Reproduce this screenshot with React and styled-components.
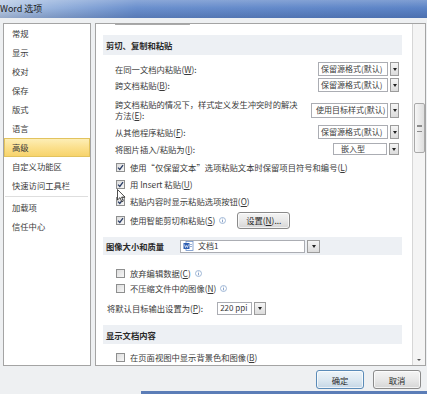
import React from "react";
import styled, { createGlobalStyle } from "styled-components";

const GlobalStyles = createGlobalStyle`
  html, body { margin: 0; padding: 0; }
  body {
    width: 427px;
    height: 394px;
    overflow: hidden;
    background: #eef0f2;
    font-family: "Noto Sans CJK SC", "Liberation Sans", sans-serif;
    font-size: 8.3px;
    color: #333;
  }
`;

const Window = styled.div`
  position: relative;
  width: 427px;
  height: 394px;
  display: flex;
  flex-direction: column;
  background: #eef0f2;
`;

const TitleBar = styled.div`
  height: 18px;
  flex: none;
  display: flex;
  align-items: center;
  font-size: 9px;
  line-height: 18px;
  color: #1c1c1c;
  background:
    linear-gradient(to bottom, rgba(255,255,255,0.22), rgba(255,255,255,0) 45%, rgba(0,20,70,0.18) 100%),
    linear-gradient(to right, #b9cce6 0%, #97b3dd 12%, #6a8fcd 32%, #5b83c6 100%);
`;

const Body = styled.div`
  display: flex;
  gap: 4px;
  padding: 5px 1px 0 3px;
  height: 343px;
`;

const Nav = styled.div`
  width: 86px;
  flex: none;
  border: 1px solid #a4a4a4;
  background: #fff;
  display: flex;
  flex-direction: column;
`;

const NavItem = styled.div`
  height: 19px;
  line-height: 19px;
  padding-left: ${(p) => (p.$active ? "7px" : "8px")};
  color: #3a3a3a;
  box-sizing: border-box;
  ${(p) =>
    p.$active &&
    `
    border: 1px solid #e2c35e;
    background: linear-gradient(to bottom, #fdeeb6 0%, #fbe08d 50%, #f7d36c 100%);
    line-height: 17px;
  `}
`;

const NavSep = styled.div`
  height: 1px;
  margin: 1px 2px 1px 1px;
  background: #dedede;
`;

const Panel = styled.div`
  flex: 1;
  border: 1px solid #a4a4a4;
  background: #fff;
  display: flex;
  overflow: hidden;
`;

const Content = styled.div`
  flex: 1;
  padding: 0 10px 0 7px;
  display: flex;
  flex-direction: column;
`;

const Stub = styled.div`
  height: 4px;
  width: 75px;
  margin-left: 12px;
  border: 1px solid #a9a9a9;
  border-top: none;
  border-radius: 0 0 3px 3px;
  background: linear-gradient(to bottom, #f1f1f1, #d9d9d9);
  box-sizing: border-box;
`;

const Section = styled.div`
  flex: none;
  height: ${(p) => p.$h}px;
  margin-top: ${(p) => p.$mt}px;
  display: flex;
  align-items: center;
  gap: 16px;
  padding-left: 3px;
  background: #edf0f4;
  color: #2a2a2a;
  font-weight: bold;
`;

const Row = styled.div`
  flex: none;
  height: ${(p) => p.$h}px;
  margin-top: ${(p) => p.$mt || 0}px;
  display: flex;
  align-items: center;
  justify-content: ${(p) => (p.$tight ? "flex-start" : "space-between")};
  gap: ${(p) => p.$gap || 5}px;
  padding-left: ${(p) => p.$indent}px;
  padding-right: 3px;
  color: #3a3a3a;
  line-height: 11px;
  white-space: nowrap;
`;

const Label = styled.span`
  display: inline-flex;
  align-items: center;
`;

const TwoLine = styled.span`
  display: block;
  width: 190px;
  white-space: normal;
  line-height: 11px;
`;

const Select = styled.div`
  display: flex;
  gap: 2px;
  height: ${(p) => p.$h}px;
  font-weight: normal;
`;

const Field = styled.div`
  width: ${(p) => p.$w}px;
  box-sizing: border-box;
  border: 1px solid #abadb3;
  background: #fff;
  display: flex;
  align-items: center;
  gap: 4px;
  padding-left: ${(p) => p.$pad || 2}px;
  color: #3a3a3a;
  font-size: 8px;
  line-height: 1;
  white-space: nowrap;
  overflow: hidden;
`;

const Arrow = styled.div`
  width: ${(p) => p.$w || 9}px;
  box-sizing: border-box;
  border: 1px solid #9c9c9c;
  background: linear-gradient(to bottom, #f5f5f5, #dcdcdc);
  display: flex;
  align-items: center;
  justify-content: center;
  &::after {
    content: "";
    border-left: 2.5px solid transparent;
    border-right: 2.5px solid transparent;
    border-top: 3px solid #222;
  }
`;

const Box = styled.span`
  width: 9px;
  height: 9px;
  flex: none;
  box-sizing: border-box;
  border: 1px solid #8e8f8f;
  background: linear-gradient(135deg, #dcdcdc, #f7f7f7);
  display: flex;
  align-items: center;
  justify-content: center;
`;

const Info = styled.svg`
  width: 7px;
  height: 7px;
  margin-left: 4px;
  flex: none;
`;

const Button = styled.div`
  width: ${(p) => p.$w}px;
  height: ${(p) => p.$h}px;
  box-sizing: border-box;
  border: 1px solid ${(p) => (p.$primary ? "#5a8bb8" : "#8a8a8a")};
  border-radius: 3px;
  background: ${(p) =>
    p.$primary
      ? "linear-gradient(to bottom, #edf4f9 0%, #dde9f2 50%, #c5d7e6 100%)"
      : "linear-gradient(to bottom, #f4f4f4 0%, #e8e8e8 50%, #d6d6d6 100%)"};
  display: flex;
  align-items: center;
  justify-content: center;
  color: #2a2a2a;
  font-size: 8.3px;
  margin-left: ${(p) => p.$ml || 0}px;
  box-shadow: inset 0 0 0 1px rgba(255,255,255,0.7);
`;

const ScrollBar = styled.div`
  width: 12px;
  flex: none;
  border-left: 1px solid #d6d6d6;
  background: #f4f4f4;
  display: flex;
  flex-direction: column;
  align-items: center;
`;

const Thumb = styled.div`
  width: 11px;
  height: 50px;
  margin-top: 79px;
  box-sizing: border-box;
  border: 1px solid #a9a9a9;
  border-radius: 2px;
  background: linear-gradient(to right, #f6f6f6, #dedede);
  display: flex;
  align-items: center;
  justify-content: center;
  &::after {
    content: "";
    width: 5px;
    height: 5px;
    border-top: 1px solid #8c8c8c;
    border-bottom: 1px solid #8c8c8c;
    box-shadow: inset 0 2px 0 -1px #8c8c8c;
  }
`;

const DownArrow = styled.div`
  margin-top: auto;
  margin-bottom: 4px;
  border-left: 2px solid transparent;
  border-right: 2px solid transparent;
  border-top: 2px solid #555;
`;

const Footer = styled.div`
  height: 25px;
  display: flex;
  align-items: flex-start;
  justify-content: flex-end;
  padding: 4px 6px 0 0;
  box-sizing: border-box;
`;

const Strip = styled.div`
  height: 3px;
  margin-left: 141px;
  background: #5b7db7;
`;

const Cursor = styled.svg`
  position: absolute;
  left: 117px;
  top: 189px;
  width: 9px;
  height: 14px;
`;

const Check = () => (
  <svg width="7" height="7" viewBox="0 0 7 7">
    <path d="M1 3.6 L2.8 5.4 L6 1.2" fill="none" stroke="#2a3d66" strokeWidth="1.3" />
  </svg>
);

const InfoIcon = () => (
  <Info viewBox="0 0 7 7">
    <circle cx="3.5" cy="3.5" r="3" fill="none" stroke="#8aa6cc" strokeWidth="0.8" />
    <rect x="3.1" y="3" width="0.8" height="2.3" fill="#6f8fbf" />
    <rect x="3.1" y="1.6" width="0.8" height="0.8" fill="#6f8fbf" />
  </Info>
);

const DocIcon = () => (
  <svg width="11" height="10" viewBox="0 0 11 10">
    <rect x="3" y="0.5" width="7" height="9" fill="#fff" stroke="#6d8fc6" strokeWidth="0.8" />
    <rect x="0.5" y="2" width="6" height="6" fill="#2f5fb3" />
    <path d="M1.5 3.5 L2.5 6.5 L3.5 4.5 L4.5 6.5 L5.5 3.5" fill="none" stroke="#fff" strokeWidth="0.7" />
    <rect x="7" y="3" width="2" height="0.7" fill="#6d8fc6" />
    <rect x="7" y="5" width="2" height="0.7" fill="#6d8fc6" />
  </svg>
);

const Dropdown = ({ text, w, aw, h = 14, pad, icon }) => (
  <Select $h={h}>
    <Field $w={w} $pad={pad}>
      {icon}
      {text}
    </Field>
    <Arrow $w={aw} />
  </Select>
);

const CheckRow = ({ checked, children, h, info, extra }) => (
  <Row $h={h} $indent={13} $tight>
    <Box>{checked && <Check />}</Box>
    <Label>
      {children}
      {info && <InfoIcon />}
    </Label>
    {extra}
  </Row>
);

const navItems = ["常规", "显示", "校对", "保存", "版式", "语言"];

export default function App() {
  return (
    <Window>
      <GlobalStyles />
      <TitleBar>Word 选项</TitleBar>
      <Body>
        <Nav>
          {navItems.map((n) => (
            <NavItem key={n}>{n}</NavItem>
          ))}
          <NavItem $active>高级</NavItem>
          <NavItem>自定义功能区</NavItem>
          <NavItem>快速访问工具栏</NavItem>
          <NavSep />
          <NavItem>加载项</NavItem>
          <NavItem>信任中心</NavItem>
        </Nav>

        <Panel>
          <Content>
            <Stub />
            <Section $h={20} $mt={10}>剪切、复制和粘贴</Section>
            <Row $h={16} $mt={6} $indent={12}>
              <Label>在同一文档内粘贴(<u>W</u>):</Label>
              <Dropdown text="保留源格式(默认)" w={70} />
            </Row>
            <Row $h={16} $indent={12}>
              <Label>跨文档粘贴(<u>B</u>):</Label>
              <Dropdown text="保留源格式(默认)" w={70} />
            </Row>
            <Row $h={30} $mt={2} $indent={12}>
              <TwoLine>
                跨文档粘贴的情况下，样式定义发生冲突时的解决
                <br />
                方法(<u>E</u>):
              </TwoLine>
              <Dropdown text="使用目标样式(默认)" w={77} h={15} pad={4} />
            </Row>
            <Row $h={14} $indent={12}>
              <Label>从其他程序粘贴(<u>F</u>):</Label>
              <Dropdown text="保留源格式(默认)" w={70} />
            </Row>
            <Row $h={20} $indent={12}>
              <Label>将图片插入/粘贴为(<u>I</u>):</Label>
              <Dropdown text="嵌入型" w={54} aw={10} h={12} pad={7} />
            </Row>
            <CheckRow h={16} checked>
              使用“仅保留文本”选项粘贴文本时保留项目符号和编号(<u>L</u>)
            </CheckRow>
            <CheckRow h={18} checked>
              用 Insert 粘贴(<u>U</u>)
            </CheckRow>
            <CheckRow h={16} checked>
              粘贴内容时显示粘贴选项按钮(<u>O</u>)
            </CheckRow>
            <CheckRow
              h={22}
              checked
              info
              extra={
                <Button $w={53} $h={17} $ml={6}>
                  设置(<u>N</u>)...
                </Button>
              }
            >
              使用智能剪切和粘贴(<u>S</u>)
            </CheckRow>

            <Section $h={18} $mt={6}>
              图像大小和质量
              <Dropdown text="文档1" w={125} aw={13} h={13} icon={<DocIcon />} />
            </Section>
            <Row $h={15} $mt={11} $indent={13} $tight>
              <Box />
              <Label>
                放弃编辑数据(<u>C</u>)
                <InfoIcon />
              </Label>
            </Row>
            <Row $h={14} $indent={13} $tight>
              <Box />
              <Label>
                不压缩文件中的图像(<u>N</u>)
                <InfoIcon />
              </Label>
            </Row>
            <Row $h={26} $indent={4} $gap={14} $tight>
              <Label>将默认目标输出设置为(<u>P</u>):</Label>
              <Dropdown text="220 ppi" w={35} aw={12} h={13} />
            </Row>

            <Section $h={19} $mt={4}>显示文档内容</Section>
            <Row $h={16} $mt={5} $indent={13} $tight>
              <Box />
              <Label>在页面视图中显示背景色和图像(<u>B</u>)</Label>
            </Row>
          </Content>
          <ScrollBar>
            <Thumb />
            <DownArrow />
          </ScrollBar>
        </Panel>
      </Body>

      <Footer>
        <Button $primary $w={48} $h={19}>确定</Button>
        <Button $w={48} $h={19} $ml={9}>取消</Button>
      </Footer>
      <Strip />

      <Cursor viewBox="0 0 9 14">
        <path d="M0.5 0.5 L0.5 11 L3 8.6 L4.8 12.8 L6.3 12.1 L4.6 8.1 L8 8.1 Z" fill="#fff" stroke="#222" strokeWidth="0.8" />
      </Cursor>
    </Window>
  );
}
